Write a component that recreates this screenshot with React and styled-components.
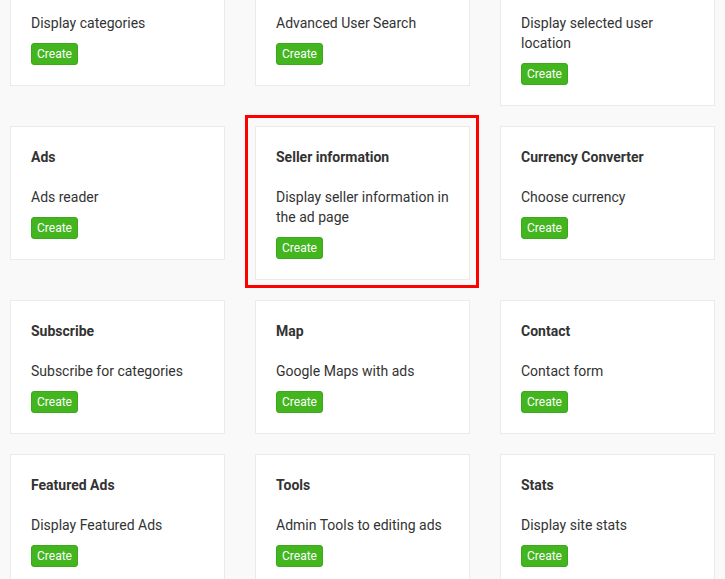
import React from 'react';
import styled, { createGlobalStyle } from 'styled-components';

const GlobalStyle = createGlobalStyle`
  html, body {
    margin: 0;
    padding: 0;
    background: #f9f9f9;
    font-family: Roboto, "Liberation Sans", Arial, sans-serif;
    color: #333;
  }
`;

// the page is scrolled a little, the first row's titles sit above the fold
const Page = styled.div`
  margin-top: -48px;
  padding: 0 10px;
`;

const Grid = styled.div`
  display: grid;
  grid-template-columns: repeat(3, 1fr);
  column-gap: 30px;
  row-gap: 20px;
  align-items: start;
`;

const Card = styled.div`
  position: relative;
  background: #fff;
  border: 1px solid #ebebeb;
  padding: 20px;
`;

const Highlight = styled.div`
  position: absolute;
  left: -11px;
  top: -12px;
  width: 228px;
  height: 167px;
  border: 3px solid #ff0000;
  pointer-events: none;
`;

const Title = styled.h4`
  margin: 0 0 20px;
  font-size: 14px;
  line-height: 20px;
  font-weight: 700;
  color: #333;
`;

const Text = styled.p`
  margin: 0 0 10px;
  font-size: 14px;
  line-height: 20px;
  color: #333;
`;

const Button = styled.button`
  display: block;
  font-family: inherit;
  font-size: 12px;
  line-height: 18px;
  padding: 1px 5px;
  color: #fff;
  background: #43b51f;
  border: 1px solid #3ca81b;
  border-radius: 3px;
  cursor: pointer;
`;

const widgets = [
  { title: 'Categories', text: 'Display categories' },
  { title: 'User Search', text: 'Advanced User Search' },
  { title: 'User Location', text: 'Display selected user location' },
  { title: 'Ads', text: 'Ads reader' },
  { title: 'Seller information', text: 'Display seller information in the ad page', selected: true },
  { title: 'Currency Converter', text: 'Choose currency' },
  { title: 'Subscribe', text: 'Subscribe for categories' },
  { title: 'Map', text: 'Google Maps with ads' },
  { title: 'Contact', text: 'Contact form' },
  { title: 'Featured Ads', text: 'Display Featured Ads' },
  { title: 'Tools', text: 'Admin Tools to editing ads' },
  { title: 'Stats', text: 'Display site stats' },
];

const App = () => {
  return (
    <>
      <GlobalStyle />
      <Page>
        <Grid>
          {widgets.map((w) => (
            <Card key={w.title}>
              {w.selected && <Highlight />}
              <Title>{w.title}</Title>
              <Text>{w.text}</Text>
              <Button>Create</Button>
            </Card>
          ))}
        </Grid>
      </Page>
    </>
  );
};

export default App;
